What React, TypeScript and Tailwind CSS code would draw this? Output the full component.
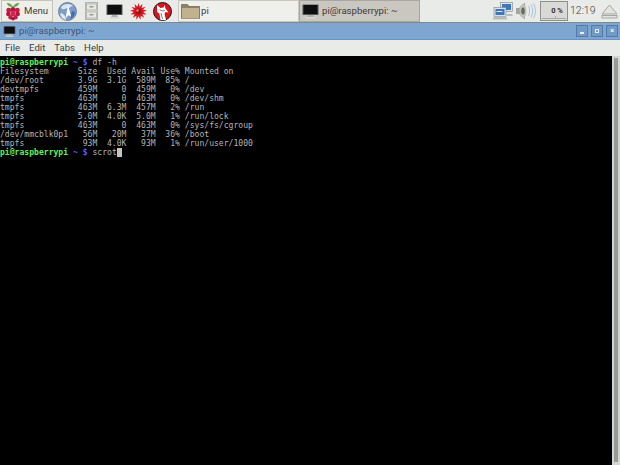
const rows = [
  'Filesystem      Size  Used Avail Use% Mounted on',
  '/dev/root       3.9G  3.1G  589M  85% /',
  'devtmpfs        459M     0  459M   0% /dev',
  'tmpfs           463M     0  463M   0% /dev/shm',
  'tmpfs           463M  6.3M  457M   2% /run',
  'tmpfs           5.0M  4.0K  5.0M   1% /run/lock',
  'tmpfs           463M     0  463M   0% /sys/fs/cgroup',
  '/dev/mmcblk0p1   56M   20M   37M  36% /boot',
  'tmpfs            93M  4.0K   93M   1% /run/user/1000',
]

function Monitor({ className = 'w-[17px] h-[15px]' }: { className?: string }) {
  return (
    <svg className={className} viewBox="0 0 17 15">
      <rect x="0.5" y="0.5" width="16" height="10.5" rx="0.5" fill="#55585a" />
      <rect x="1.5" y="1" width="14" height="9" fill="#0c0e10" />
      <path d="M6 11h5l1 2H5z" fill="#aeb0ac" />
      <rect x="3.5" y="13" width="10" height="1.5" rx="0.7" fill="#d6d6d2" />
    </svg>
  )
}

function Raspberry() {
  return (
    <svg className="w-[16px] h-[19px]" viewBox="0 0 14 17">
      <path d="M7 4C5 1.5 3 .5 1.500 1 2 3.500 4 4.500 7 4.500 10 4.500 12 3.500 12.500 1 11 .5 9 1.500 7 4z" fill="#5fa83a" />
      <circle cx="3.2" cy="7.3" r="2.2" fill="#c51d4a" />
      <circle cx="7" cy="6.6" r="2.2" fill="#b5183f" />
      <circle cx="10.8" cy="7.3" r="2.2" fill="#c51d4a" />
      <circle cx="2.8" cy="10.8" r="2" fill="#b5183f" />
      <circle cx="7" cy="10.2" r="2.3" fill="#d02553" />
      <circle cx="11.2" cy="10.8" r="2" fill="#b5183f" />
      <circle cx="4.8" cy="13.6" r="2" fill="#c51d4a" />
      <circle cx="9.2" cy="13.6" r="2" fill="#c51d4a" />
      <circle cx="7" cy="15" r="1.6" fill="#a81439" />
    </svg>
  )
}

function Globe() {
  return (
    <svg className="w-[19px] h-[19px] ml-[5px]" viewBox="0 0 19 19">
      <circle cx="9.5" cy="9.5" r="9" fill="#7d9dc8" stroke="#5b6f8c" strokeWidth="0.8" />
      <path d="M3 5c3-3.500 9-4 12-1-2 0-3 2-5 2S6 8 4 7z" fill="#dbe5f0" />
      <path d="M2 12c2-2 3 0 5 2l1 4c-3-.5-5-3-6-6z" fill="#e3e8ee" />
      <path d="M10 3.500l3.500 12-3-2.500-3 3.500z" fill="#ffffff" />
      <path d="M14 9l3 1c0 3-2 6-5 7 1-3 1-5 2-8z" fill="#3f6ea8" />
    </svg>
  )
}

function Drawers() {
  return (
    <svg className="w-[13px] h-[18px] ml-[8px]" viewBox="0 0 13 18">
      <rect x="0.5" y="0.5" width="12" height="17" fill="#dcdcd6" stroke="#b3b3ad" />
      <rect x="1.5" y="2" width="10" height="6" fill="#e9e9e3" stroke="#a9a9a3" strokeWidth="0.7" />
      <rect x="1.5" y="10" width="10" height="6" fill="#e9e9e3" stroke="#a9a9a3" strokeWidth="0.7" />
      <rect x="4.5" y="4" width="4" height="1.500" fill="#9a9a94" />
      <rect x="4.5" y="12" width="4" height="1.500" fill="#9a9a94" />
    </svg>
  )
}

function Burst() {
  const pts: string[] = []
  for (let i = 0; i < 26; i++) {
    const r = i % 2 === 0 ? 8.5 : 4.8
    const a = (i / 26) * Math.PI * 2
    pts.push(`${(8.5 + r * Math.sin(a)).toFixed(2)},${(8.5 - r * Math.cos(a)).toFixed(2)}`)
  }
  return (
    <svg className="w-[17px] h-[17px] ml-[7px]" viewBox="0 0 17 17">
      <polygon points={pts.join(' ')} fill="#dc1620" />
      <circle cx="8.5" cy="8.5" r="3" fill="#a00f16" />
      <circle cx="7.5" cy="7.5" r="1.200" fill="#ee7f7f" />
    </svg>
  )
}

function Wolfram() {
  return (
    <svg className="w-[19px] h-[19px] ml-[6px]" viewBox="0 0 19 19">
      <circle cx="9.5" cy="9.5" r="9" fill="#d8141c" stroke="#1a1a1a" strokeWidth="1" />
      <path d="M4 3l3.500 3 3-.5 1-2.500 1 3.500 3 4-3-.5-1 2 1.500 6H7.500L6.500 12 4 9.500z" fill="#ffffff" />
      <path d="M6.500 7.500l3 1.500 2.500-.5M8 11l1.500 6" stroke="#333333" strokeWidth="0.6" fill="none" />
    </svg>
  )
}

function Folder() {
  return (
    <svg className="w-[19px] h-[16px]" viewBox="0 0 19 16">
      <path d="M.5 1.500h6l1.500 2h10.500v12H.5z" fill="#8f8068" stroke="#6c604e" strokeWidth="0.7" />
      <path d="M1 5h17v10.500H1z" fill="#c2b18f" />
    </svg>
  )
}

function Network() {
  return (
    <svg className="w-[20px] h-[18px]" viewBox="0 0 20 18">
      <rect x="7.500" y="0.500" width="12" height="9" fill="#dfe3e6" stroke="#7d8388" strokeWidth="0.6" />
      <rect x="9" y="2" width="9" height="6" fill="#3c78bd" />
      <rect x="1" y="5.500" width="12" height="9" fill="#dfe3e6" stroke="#7d8388" strokeWidth="0.6" />
      <rect x="2.500" y="7" width="9" height="6" fill="#3c78bd" />
      <rect x="3.500" y="9" width="6" height="1" fill="#dce8f5" />
      <path d="M0 16l2-1.500h10l2 1.500v1.500H0z" fill="#b9bcbb" />
      <path d="M14 12h5l1 2h-7z" fill="#b9bcbb" />
    </svg>
  )
}

function Speaker() {
  return (
    <svg className="w-[21px] h-[18px]" viewBox="0 0 21 18">
      <path d="M0 6h3l6-5.500v17L3 12H0z" fill="#a3a39d" />
      <ellipse cx="7" cy="9" rx="3.500" ry="7" fill="#c0c0ba" />
      <ellipse cx="7" cy="9" rx="1.800" ry="3.500" fill="#6a6a64" />
      <path d="M12.500 4c1.500 3 1.500 7 0 10M15 2.500c2 4 2 9 0 13M17.500 1.500c2.500 5 2.500 10 0 15" stroke="#a8c2e2" strokeWidth="1" fill="none" />
    </svg>
  )
}

export default function App() {
  return (
    <div className="w-[620px] h-[465px] flex flex-col overflow-hidden bg-black font-['Roboto',sans-serif]">
      {/* Panel */}
      <div className="h-[23px] shrink-0 flex items-center bg-[#e8ebe7] text-[9.600px] text-[#3c3c3c] border-b border-[#7f8a8f]">
        <div className="w-[52px] h-[22px] ml-[1px] flex items-center gap-[3px] pl-[3px] bg-[#eeeeea] border border-[#c4c4be]">
          <Raspberry />
          <span>Menu</span>
        </div>
        <Globe />
        <Drawers />
        <Monitor className="w-[17px] h-[15px] ml-[8px]" />
        <Burst />
        <Wolfram />
        <div className="w-[121px] h-[22px] ml-[6px] flex items-center gap-[1px] pl-[2px] bg-[#efefeb] border border-[#c8c8c2]">
          <Folder />
          <span>pi</span>
        </div>
        <div className="w-[121px] h-[22px] flex items-center gap-[3px] pl-[2px] bg-[#c9c7bf] border border-[#a8a69e]">
          <Monitor />
          <span>pi@raspberrypi: ~</span>
        </div>
        <div className="flex-1" />
        <Network />
        <div className="ml-[3px]"><Speaker /></div>
        <div className="relative ml-[3px] w-[28px] h-[20px] flex items-center justify-center bg-[#d9d9d5] border border-[#8f8f8b] text-[7.500px] text-[#333333] font-bold">
          <span className="ml-[6px]">0 %</span>
          <span className="absolute left-[1px] right-[1px] bottom-[1px] h-[1px] bg-[#a8a8a4]" />
          <span className="absolute left-[14px] bottom-[1px] w-[1px] h-[3px] bg-[#a8a8a4]" />
        </div>
        <span className="ml-[2px] w-[26px] text-[10.500px] font-light">12:19</span>
        <svg className="w-[17px] h-[15px] ml-[5px] mr-[2px]" viewBox="0 0 17 15">
          <path d="M8.500 1l7.500 9H1z" fill="#e3e3df" stroke="#a7a7a2" />
          <rect x="1" y="11.500" width="15" height="2.500" fill="#e3e3df" stroke="#a7a7a2" />
        </svg>
      </div>

      {/* Title bar */}
      <div className="h-[17px] shrink-0 flex items-center bg-[#7ea6d0] border-b border-[#6b93bf] pl-[3px] pr-[2px] text-[9.600px] text-[#3b5570]">
        <Monitor className="w-[13px] h-[11px]" />
        <span className="ml-[3px]">pi@raspberrypi: ~</span>
        <div className="flex-1" />
        <div className="flex gap-[3px]">
          <div className="w-[12px] h-[12px] flex items-center justify-center bg-[#7399c6] border border-[#527bab]">
            <span className="block w-[4px] h-[2px] mt-[3px] bg-[#e8eef6]" />
          </div>
          <div className="w-[12px] h-[12px] flex items-center justify-center bg-[#7399c6] border border-[#527bab]">
            <span className="block w-[4px] h-[4px] border border-[#e8eef6]" />
          </div>
          <div className="w-[12px] h-[12px] flex items-center justify-center bg-[#7399c6] border border-[#527bab] text-[8px] leading-none font-bold text-[#eef3f9]">×</div>
        </div>
      </div>

      {/* Menu bar */}
      <div className="h-[16px] shrink-0 flex items-center gap-[9px] bg-[#e8ebe7] pl-[5px] text-[9.600px] text-[#3c3c3c]">
        <span>File</span>
        <span>Edit</span>
        <span>Tabs</span>
        <span>Help</span>
      </div>

      {/* Terminal */}
      <div className="flex-1 flex min-h-0">
        <pre className="flex-1 bg-black pt-[2px] font-['DejaVu_Sans_Mono',monospace] text-[8.080px] leading-[9px] text-[#b4b4b4]">
          <div><span className="font-bold text-[#5cf05c]">pi@raspberrypi</span> <span className="text-[#5c5cff] font-bold">~ $</span> df -h</div>
          {rows.map(r => <div key={r}>{r}</div>)}
          <div><span className="font-bold text-[#5cf05c]">pi@raspberrypi</span> <span className="text-[#5c5cff] font-bold">~ $</span> scrot<span className="inline-block w-[5px] h-[9px] align-top bg-[#c4c4c4]" /></div>
        </pre>
        <div className="w-[8px] shrink-0 flex bg-[#d3d5d1] px-[2px] pt-[2px] pb-[3px]">
          <div className="flex-1 bg-[#989c98]" />
        </div>
      </div>
    </div>
  )
}
